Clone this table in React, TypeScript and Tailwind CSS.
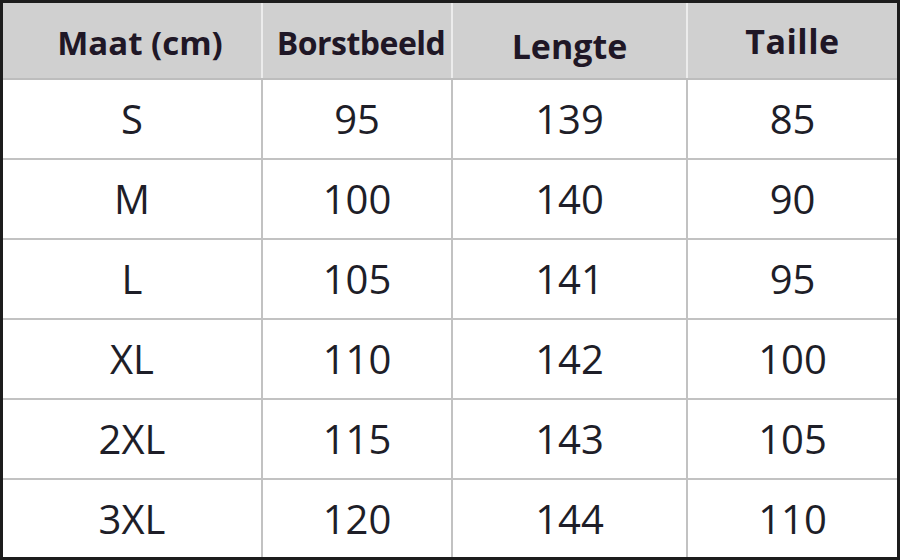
const headers = [
  { label: "Maat (cm)", cls: "pt-[4px] pl-[16px] text-[33px]" },
  { label: "Borstbeeld", cls: "pt-[4px] pl-[8px] text-[32px] tracking-[-0.5px]" },
  { label: "Lengte", cls: "pt-[10px] text-[34px]" },
  { label: "Taille", cls: "pt-0 text-[34px] tracking-[0.5px]" },
];

const rows = [
  ["S", "95", "139", "85"],
  ["M", "100", "140", "90"],
  ["L", "105", "141", "95"],
  ["XL", "110", "142", "100"],
  ["2XL", "115", "143", "105"],
  ["3XL", "120", "144", "110"],
];

const colWidths = ["w-[260px]", "w-[190px]", "w-[235px]", "flex-1"];

export default function App() {
  return (
    <div className="w-[900px] h-[560px] bg-white border-[3px] border-[#1c1c1c] flex flex-col font-['Open_Sans',sans-serif]">
      <div className="flex h-[77px] bg-[#d0d0d0] border-b-2 border-[#bdbdbd]">
        {headers.map((h, i) => (
          <div
            key={h.label}
            className={`${colWidths[i]} ${i < 3 ? "border-r-2 border-[#ececec]" : ""} flex items-center justify-center`}
          >
            <span className={`${h.cls} font-bold text-[#1f1726] leading-none`}>{h.label}</span>
          </div>
        ))}
      </div>
      {rows.map((r, ri) => (
        <div
          key={r[0]}
          className={`flex ${ri < rows.length - 1 ? "h-[80px] border-b-2 border-[#c2c2c2]" : "h-[77px]"}`}
        >
          {r.map((v, i) => (
            <div
              key={i}
              className={`${colWidths[i]} ${i < 3 ? "border-r-2 border-[#c2c2c2]" : ""} flex items-center justify-center`}
            >
              <span className="text-[40px] text-[#1e1e28] leading-none">{v}</span>
            </div>
          ))}
        </div>
      ))}
    </div>
  );
}
